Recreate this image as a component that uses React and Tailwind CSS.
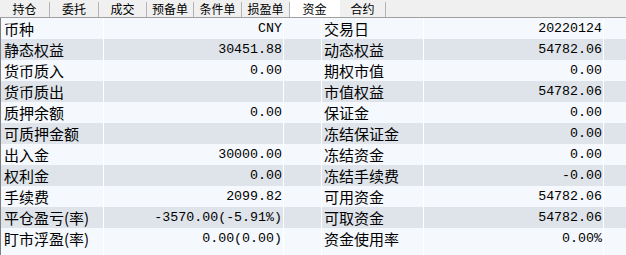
const tabs = [
  { name: '持仓', w: 'w-[50px]' },
  { name: '委托', w: 'w-[49px]' },
  { name: '成交', w: 'w-[48px]' },
  { name: '预备单', w: 'w-[47px]' },
  { name: '条件单', w: 'w-[48px]' },
  { name: '损盈单', w: 'w-[48px]' },
  { name: '资金', w: 'w-[50px]', active: true },
  { name: '合约', w: 'w-[46px]' },
]

const rows = [
  ['币种', 'CNY', '交易日', '20220124'],
  ['静态权益', '30451.88', '动态权益', '54782.06'],
  ['货币质入', '0.00', '期权市值', '0.00'],
  ['货币质出', '', '市值权益', '54782.06'],
  ['质押余额', '0.00', '保证金', '0.00'],
  ['可质押金额', '', '冻结保证金', '0.00'],
  ['出入金', '30000.00', '冻结资金', '0.00'],
  ['权利金', '0.00', '冻结手续费', '-0.00'],
  ['手续费', '2099.82', '可用资金', '54782.06'],
  ['平仓盈亏(率)', '-3570.00(-5.91%)', '可取资金', '54782.06'],
  ['盯市浮盈(率)', '0.00(0.00)', '资金使用率', '0.00%'],
]

const cjk = "font-['Noto_Sans_CJK_SC',sans-serif]"
const mono = "font-['Liberation_Mono',monospace]"

export default function App() {
  return (
    <div className="w-[626px] h-[255px] overflow-hidden bg-[#f5f8fc] text-black">
      <div className={`flex h-[18px] bg-[#f0f0f0] border-b border-[#a0a0a0] ${cjk}`}>
        {tabs.map(t => (
          <div key={t.name} className={`${t.w} flex items-stretch ${t.active ? 'bg-white' : ''}`}>
            <div className="flex-1 flex items-center justify-center text-[12px] leading-none">{t.name}</div>
            <div className={`w-px mt-[2px] ${t.active ? 'bg-transparent' : 'bg-[#b4b4b4]'}`}></div>
          </div>
        ))}
      </div>
      <div className="border-l border-[#808080]">
        {rows.map((r, i) => (
          <div key={i}
            className={`grid grid-cols-[103px_180px_38px_102px_180px_1fr] h-[21px] ${i % 2 ? 'bg-[#dfe4ea]' : 'bg-[#f5f8fc]'}`}>
            <div className={`border-r border-white pl-[3px] flex items-center text-[15px] leading-none whitespace-nowrap ${cjk}`}>{r[0]}</div>
            <div className={`border-r border-white pr-[1px] flex items-center justify-end text-[13.3px] leading-none whitespace-nowrap ${mono}`}>{r[1]}</div>
            <div className="border-r border-white"></div>
            <div className={`border-r border-white pl-[2px] flex items-center text-[15px] leading-none whitespace-nowrap ${cjk}`}>{r[2]}</div>
            <div className={`border-r border-white pr-[1px] flex items-center justify-end text-[13.3px] leading-none whitespace-nowrap ${mono}`}>{r[3]}</div>
            <div></div>
          </div>
        ))}
        <div className="grid grid-cols-[103px_180px_38px_102px_180px_1fr] h-[6px] bg-[#f5f8fc]">
          <div className="border-r border-white"></div>
          <div className="border-r border-white"></div>
          <div className="border-r border-white"></div>
          <div className="border-r border-white"></div>
          <div className="border-r border-white"></div>
          <div></div>
        </div>
      </div>
    </div>
  )
}
